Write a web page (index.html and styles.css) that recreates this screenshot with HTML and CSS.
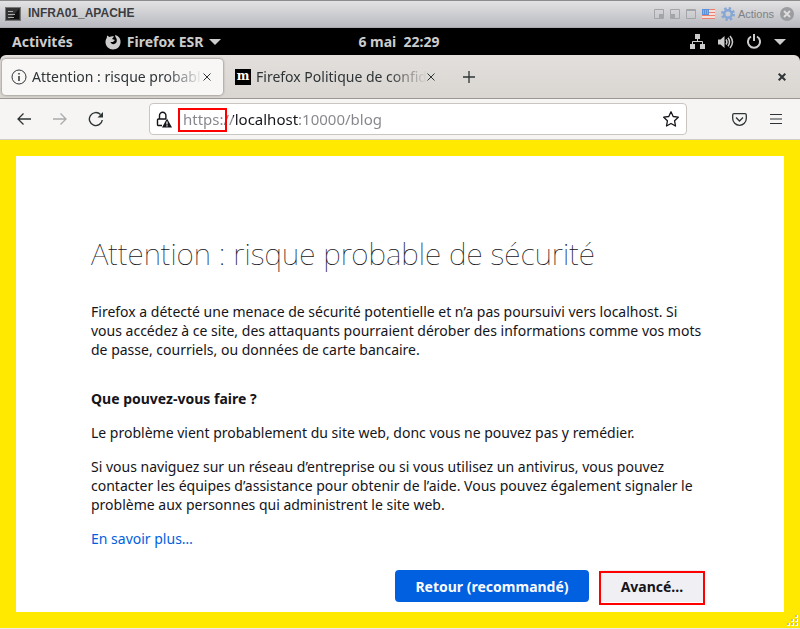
FILE: index.html
```html
<!DOCTYPE html>
<html lang="fr">
<head>
    <meta charset="UTF-8">
    <meta name="viewport" content="width=device-width, initial-scale=1.0">
    <title>INFRA01_APACHE</title>
    <link rel="stylesheet" href="styles.css">
</head>
<body>
    <!-- Console window title -->
    <header class="console-bar">
        <svg class="console-icon" width="16" height="14" viewBox="0 0 16 14">
            <rect x="0.5" y="0.5" width="15" height="13" fill="#333" stroke="#777"/>
            <path d="M14 2v10H5z" fill="#111"/>
            <path d="M3 4.5h5M3 7.5h7M3 10.5h6" stroke="#aaa"/>
        </svg>
        <span class="console-name">INFRA01_APACHE</span>
        <div class="console-tools">
            <svg width="42" height="10" viewBox="0 0 42 10" fill="none" stroke="#a4a5a9">
                <path d="M.5.5h9v9h-9zM16.500.5h9v9h-9zM32.500.5h9v9h-9zM32 1.500h10"/>
                <path d="M5 5h4v4H5zM17 5h4v4h-4z" fill="#a4a5a9" stroke="none"/>
            </svg>
            <svg class="flag" width="13" height="10" viewBox="0 0 13 10">
                <path fill="#f3ded9" d="M0 0h13v10H0z"/>
                <path d="M0 .5h13M0 3.500h13M0 6.500h13M0 9.500h13" stroke="#ec8070"/>
                <path fill="#5d91d8" d="M0 0h7v6H0z"/>
                <path d="M1 2h5M1 4h5" stroke="#b7d0ee" stroke-dasharray="1 1"/>
            </svg>
            <svg width="14" height="14" viewBox="0 0 14 14" fill="none" stroke="#86a7d5">
                <circle cx="7" cy="7" r="5.500" stroke-width="3" stroke-dasharray="2.300 2.020"/>
                <circle cx="7" cy="7" r="3.800" stroke-width="2.600"/>
            </svg>
            <button class="actions">Actions</button>
            <button class="round-close" aria-label="Fermer la console">
                <svg width="14" height="14" viewBox="0 0 14 14">
                    <circle cx="7" cy="7" r="7" fill="#9b9c9f"/>
                    <path d="M4 4l6 6M10 4l-6 6" stroke="#ddd" stroke-width="2"/>
                </svg>
            </button>
        </div>
    </header>

    <!-- Desktop bar -->
    <div class="desktop-bar">
        <div class="desktop-left">
            <button>Activités</button>
            <button class="app-menu">
                <svg width="16" height="16" viewBox="0 0 16 16">
                    <path d="M2 1.500 4.500 3C6 2 8 2 9 2.500L7 5l3 1-2 2H5.500C6 10.500 9.500 10.800 11 9c1.500-2 .8-4.500-.5-6L10 1c4 1 6 4 5.500 7.800C15 13 12 15.500 8 15.500S.8 12.500.5 8.500C.4 6.500 1 5 1.800 4z" fill="#ccc"/>
                </svg>
                Firefox ESR
                <svg width="12" height="6" viewBox="0 0 12 6"><path d="M0 0h12L6 6z" fill="#ccc"/></svg>
            </button>
        </div>
        <time class="clock">6 mai&nbsp; 22:29</time>
        <div class="desktop-status">
            <svg width="15" height="15" viewBox="0 0 15 15" fill="#ccc">
                <path d="M5 0h5v5H5zM0 10h5v5H0zM10 10h5v5h-5z"/>
                <path d="M7.500 5v3M2.500 10V7.500h10V10" fill="none" stroke="#ccc"/>
            </svg>
            <svg width="16" height="14" viewBox="0 0 16 14" fill="none" stroke="#ccc" stroke-width="1.500">
                <path d="M0 4.500h2.500L6.500 1v12L2.500 9.500H0z" fill="#ccc" stroke="none"/>
                <path d="M8 4.500q1.800 2.500 0 5M10 2.800q3 4.200 0 8.400M12 1q5 6 0 12"/>
            </svg>
            <svg width="14" height="15" viewBox="0 0 14 15" fill="none" stroke="#ccc" stroke-width="2">
                <path d="M4 2.500a6 6 0 1 0 6 0M7 0v7"/>
            </svg>
            <svg width="12" height="6" viewBox="0 0 12 6"><path d="M0 0h12L6 6z" fill="#ccc"/></svg>
        </div>
    </div>

    <!-- Browser tabs -->
    <div class="tabs-wrap">
        <nav class="tabs">
            <div class="tab active">
                <svg width="16" height="16" viewBox="0 0 16 16" fill="none" stroke="#2e3436">
                    <circle cx="8" cy="8" r="7"/>
                    <path d="M8 7v5M8 4v1.500" stroke-width="1.500"/>
                </svg>
                <span class="tab-title">Attention : risque probable</span>
                <button class="tab-close" aria-label="Fermer l’onglet">
                    <svg width="8" height="8" viewBox="0 0 8 8"><path d="M.5.5l7 7M7.500.5l-7 7" stroke="#2e3436"/></svg>
                </button>
            </div>
            <div class="tab">
                <span class="mozilla">m</span>
                <span class="tab-title">Firefox Politique de confid</span>
                <button class="tab-close" aria-label="Fermer l’onglet">
                    <svg width="8" height="8" viewBox="0 0 8 8"><path d="M.5.5l7 7M7.500.5l-7 7" stroke="#2e3436"/></svg>
                </button>
            </div>
            <button class="new-tab" aria-label="Nouvel onglet">
                <svg width="12" height="12" viewBox="0 0 12 12"><path d="M6 0v12M0 6h12" stroke="#2e3436" stroke-width="1.300"/></svg>
            </button>
            <button class="window-close" aria-label="Fermer">
                <svg width="8" height="8" viewBox="0 0 8 8"><path d="M.7.7l6.600 6.600M7.300.7L.7 7.300" stroke="#2e3436" stroke-width="2"/></svg>
            </button>
        </nav>
    </div>

    <!-- Navigation toolbar -->
    <div class="toolbar">
        <div class="nav-buttons">
            <button aria-label="Précédent">
                <svg width="16" height="16" viewBox="0 0 16 16" fill="none" stroke="#2e3436" stroke-width="1.300"><path d="M15 8H2M7.500 2.500 2 8l5.500 5.500"/></svg>
            </button>
            <button aria-label="Suivant">
                <svg width="16" height="16" viewBox="0 0 16 16" fill="none" stroke="#aaabab" stroke-width="1.300"><path d="M1 8h13M8.500 2.500 14 8l-5.500 5.500"/></svg>
            </button>
            <button aria-label="Actualiser">
                <svg width="16" height="16" viewBox="0 0 16 16" fill="none" stroke="#2e3436" stroke-width="1.400"><path d="M14.300 9A6.500 6.500 0 1 1 12.500 3.500"/><path d="M15 1v5.500H9.500z" fill="#2e3436" stroke="none"/></svg>
            </button>
        </div>
        <div class="url-bar">
            <svg width="16" height="17" viewBox="0 0 16 17" fill="none" stroke="#15141a" stroke-width="1.400">
                <path d="M6 14.500H2.500a1 1 0 0 1-1-1V9a1 1 0 0 1 1-1H10M3.500 8V4.500a3.200 3.200 0 0 1 6.400 0V8"/>
                <path d="M11 7.500 16 16.500H6z" fill="#15141a" stroke="none"/>
                <path d="M11 10.500v3M11 14.200v1.200" stroke="#fff" stroke-width="1.200"/>
            </svg>
            <div class="url-field">
                <input type="text" aria-label="Adresse" value="https://localhost:10000/blog">
                <span class="mark mark-scheme"></span>
            </div>
            <button aria-label="Marque-page">
                <svg width="16" height="16" viewBox="0 0 16 16" fill="none" stroke="#15141a" stroke-width="1.300" stroke-linejoin="round"><path d="M8 .8l2.200 4.700 5.100.7-3.700 3.600.9 5.200L8 12.500 3.500 15l.9-5.200L.7 6.200l5.100-.7z"/></svg>
            </button>
        </div>
        <div class="side-buttons">
            <button aria-label="Pocket">
                <svg width="15" height="13" viewBox="0 0 15 13" fill="none" stroke="#2e3436" stroke-width="1.300"><path d="M2 .7h11q1.300 0 1.300 1.300v3.500a6.800 6.800 0 0 1-13.600 0V2Q.7.7 2 .7z"/><path d="M4 4.500 7.500 8 11 4.500"/></svg>
            </button>
            <button aria-label="Menu">
                <svg width="12" height="10" viewBox="0 0 12 10"><path d="M0 .5h12M0 5h12M0 9.500h12" stroke="#2e3436" stroke-width="1.200"/></svg>
            </button>
        </div>
    </div>

    <!-- Warning page -->
    <main class="warning">
        <div class="warning-box">
            <h1>Attention : risque probable de sécurité</h1>
            <p class="intro">Firefox a détecté une menace de sécurité potentielle et n’a pas poursuivi vers localhost. Si vous accédez à ce site, des attaquants pourraient dérober des informations comme vos mots de passe, courriels, ou données de carte bancaire.</p>
            <h2>Que pouvez-vous faire ?</h2>
            <p>Le problème vient probablement du site web, donc vous ne pouvez pas y remédier.</p>
            <p>Si vous naviguez sur un réseau d’entreprise ou si vous utilisez un antivirus, vous pouvez contacter les équipes d’assistance pour obtenir de l’aide. Vous pouvez également signaler le problème aux personnes qui administrent le site web.</p>
            <p><a href="#">En savoir plus…</a></p>
            <div class="buttons">
                <button class="primary">Retour (recommandé)</button>
                <button class="advanced">Avancé…<span class="mark mark-advanced"></span></button>
            </div>
        </div>
        <svg class="grip" width="11" height="11" viewBox="0 0 11 11">
            <path fill="#fff" d="M8 0h3v3H8zM4 4h3v3H4zM8 4h3v3H8zM0 8h3v3H0zM4 8h3v3H4zM8 8h3v3H8z"/>
            <path fill="#bbb" d="M8 0h2v2H8zM4 4h2v2H4zM8 4h2v2H8zM0 8h2v2H0zM4 8h2v2H4zM8 8h2v2H8z"/>
        </svg>
    </main>
    <footer class="desktop-edge"></footer>
</body>
</html>
```

FILE: styles.css
```css
* {
    box-sizing: border-box;
}

body {
    margin: 0;
    min-height: 100vh;
    display: flex;
    flex-direction: column;
    font-family: "Noto Sans", "Open Sans", sans-serif;
    font-size: 14px;
    color: #15141a;
    background: #ece9e6;
}

button {
    display: flex;
    align-items: center;
    justify-content: center;
    padding: 0;
    border: none;
    background: none;
    font: inherit;
    color: inherit;
}

svg {
    display: block;
    flex: none;
}

/* Console title bar */
.console-bar {
    display: flex;
    align-items: center;
    height: 28px;
    padding: 0 6px 0 5px;
    border-top: 1px solid #8c8c8c;
    border-bottom: 1px solid #aaaaaf;
    background: linear-gradient(#e2e2e4, #b9bac0);
    font-family: "Liberation Sans", Arial, sans-serif;
    font-size: 12px;
}

.console-name {
    margin-left: 7px;
    padding-bottom: 2px;
    font-weight: bold;
    color: #3c3d40;
}

.console-tools {
    display: flex;
    align-items: center;
    margin-left: auto;
    gap: 6px;
}

.actions {
    margin-left: -3px;
    font-size: 11px;
    color: #808184;
}

/* Desktop bar */
.desktop-bar {
    display: grid;
    grid-template-columns: 1fr auto 1fr;
    align-items: center;
    height: 27px;
    padding: 0 14px 0 12px;
    background: #000;
    color: #ccc;
    font-weight: bold;
}

.desktop-left {
    display: flex;
    gap: 32px;
}

.app-menu {
    gap: 6px;
}

.desktop-status {
    display: flex;
    align-items: center;
    justify-content: flex-end;
    gap: 13px;
}

/* Tabs */
.tabs-wrap {
    background: #000;
}

.tabs {
    display: flex;
    align-items: center;
    gap: 3px;
    height: 44px;
    padding: 0 14px 0 2px;
    border-bottom: 1px solid #9b9894;
    border-radius: 6px 6px 0 0;
    background: linear-gradient(#e3dfdc, #d9d5d1);
    color: #2e3436;
}

.tab {
    display: flex;
    align-items: center;
    width: 221px;
    height: 36px;
    padding: 0 12px 0 9px;
    border-radius: 4px;
}

.tab.active {
    background: #f8f7f6;
    box-shadow: 0 0 2px 1px #aaa6a2;
}

.tab-title {
    flex: 1;
    margin-left: 5px;
    overflow: hidden;
    white-space: nowrap;
    mask-image: linear-gradient(to left, transparent, #000 38px);
}

.mozilla {
    width: 16px;
    height: 16px;
    background: #000;
    color: #fff;
    font: bold 12px/14px "DejaVu Serif", serif;
    text-align: center;
}

.new-tab {
    margin-left: 13px;
}

.window-close {
    margin-left: auto;
}

/* Toolbar */
.toolbar {
    display: flex;
    align-items: center;
    height: 41px;
    padding: 0 18px 0 16px;
    border-bottom: 1px solid #cfcbc6;
    background: #f6f5f4;
}

.nav-buttons {
    display: flex;
    gap: 20px;
}

.url-bar {
    flex: 1;
    display: flex;
    align-items: center;
    height: 32px;
    margin: 0 45px;
    padding: 0 7px 0 6px;
    border: 1px solid #c9c5c1;
    border-radius: 4px;
    background: #fff;
}

.url-field {
    position: relative;
    flex: 1;
    margin-left: 11px;
}

.url-field input {
    width: 100%;
    padding: 0;
    border: none;
    outline: none;
    font: inherit;
    font-size: 15px;
    color: transparent;
    background: linear-gradient(90deg, #85848a 50px, #15141a 50px, #15141a 115px, #85848a 115px);
    background-clip: text;
}

/* Red highlight frames */
.mark {
    position: absolute;
    border: 2px solid #f00;
}

.mark-scheme {
    inset: -1px auto -3px -5px;
    width: 49px;
}

.mark-advanced {
    inset: 1px 0 -3px;
}

.side-buttons {
    display: flex;
    align-items: center;
    gap: 23px;
}

/* Warning page */
.warning {
    position: relative;
    flex: 1;
    padding: 16px;
    background: #ffe900;
}

.warning-box {
    min-height: 100%;
    padding: 75px 79px 10px 75px;
    background: #fff;
    line-height: 19px;
}

h1 {
    margin: 0 0 25px;
    font-size: 30px;
    font-weight: 100;
    line-height: 46px;
}

h2 {
    margin: 0 0 15px;
    font-size: 14px;
    line-height: 19px;
}

p {
    margin: 0 0 15px;
}

.intro {
    margin-bottom: 30px;
}

a {
    color: #0060df;
    text-decoration: none;
}

.buttons {
    display: flex;
    justify-content: flex-end;
    gap: 10px;
    margin-top: 22px;
}

.buttons button {
    position: relative;
    height: 32px;
    border-radius: 4px;
    font-weight: bold;
}

.primary {
    width: 194px;
    background: #0060df;
    color: #fbfbfe;
}

.advanced {
    width: 106px;
    background: #f0f0f4;
}

.grip {
    position: absolute;
    right: 2px;
    bottom: 2px;
}

.desktop-edge {
    height: 1px;
}
```
